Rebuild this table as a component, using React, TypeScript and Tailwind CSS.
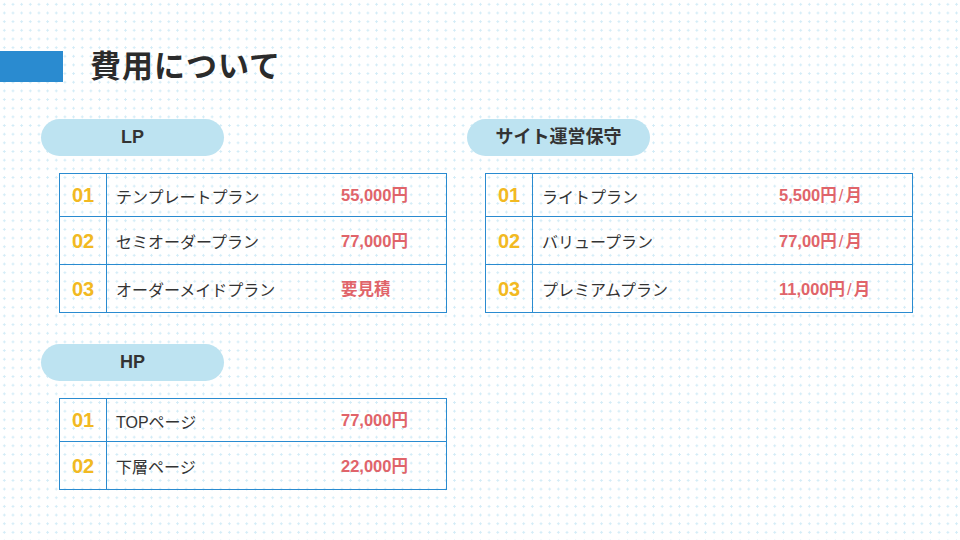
import React from "react";

type Row = { no: string; name: string; price: string; unit?: boolean };

const lpRows: Row[] = [
  { no: "01", name: "テンプレートプラン", price: "55,000円" },
  { no: "02", name: "セミオーダープラン", price: "77,000円" },
  { no: "03", name: "オーダーメイドプラン", price: "要見積" },
];

const hpRows: Row[] = [
  { no: "01", name: "TOPページ", price: "77,000円" },
  { no: "02", name: "下層ページ", price: "22,000円" },
];

const siteRows: Row[] = [
  { no: "01", name: "ライトプラン", price: "5,500円", unit: true },
  { no: "02", name: "バリュープラン", price: "77,00円", unit: true },
  { no: "03", name: "プレミアムプラン", price: "11,000円", unit: true },
];

function Pill({ label }: { label: string }) {
  return (
    <div className="flex h-[37px] w-[183px] items-center justify-center rounded-full bg-[#bde3f1] text-[18px] font-bold text-[#333]">
      {label}
    </div>
  );
}

function PriceTable({
  rows,
  width,
  nameWidth,
}: {
  rows: Row[];
  width: string;
  nameWidth: string;
}) {
  return (
    <div className={`ml-[18px] mt-[17px] border border-[#2a8bd0] ${width}`}>
      {rows.map((r, i) => (
        <div
          key={r.no}
          className={`flex items-center ${i === 0 ? "h-[42px]" : "h-[48px] border-t border-[#2a8bd0]"}`}
        >
          <div className="flex h-full w-[47px] items-center justify-center border-r border-[#2a8bd0] text-[20px] font-bold text-[#f2b922]">
            {r.no}
          </div>
          <div className="flex h-full flex-1 items-center pl-[9px]">
            <div className={`pt-[5px] text-[16px] text-[#333] ${nameWidth}`}>{r.name}</div>
            <div className="pt-[1px] text-[16.5px] font-bold text-[#e0646a]">
              {r.price}
              {r.unit && (
                <>
                  <span className="px-[2px] font-normal">/</span>月
                </>
              )}
            </div>
          </div>
        </div>
      ))}
    </div>
  );
}

export default function App() {
  return (
    <div
      className="h-[540px] w-[960px] overflow-hidden bg-white bg-[radial-gradient(circle,#d3ecf7_1px,transparent_1.3px)] bg-[size:8.67px_8.67px] text-[#333]"
      style={{ fontFamily: '"Liberation Sans", "Noto Sans CJK JP", sans-serif' }}
    >
      <div className="flex items-center pt-[51px]">
        <div className="h-[31px] w-[63px] bg-[#2a8bd0]" />
        <h1 className="ml-[27px] text-[31px] font-bold leading-none tracking-[1px] text-[#2b2b2b]">
          費用について
        </h1>
      </div>

      <div className="mt-[37px] flex pl-[41px]">
        <div className="w-[406px]">
          <Pill label="LP" />
          <PriceTable rows={lpRows} width="w-[388px]" nameWidth="w-[225px]" />
          <div className="mt-[31px]">
            <Pill label="HP" />
            <PriceTable rows={hpRows} width="w-[388px]" nameWidth="w-[225px]" />
          </div>
        </div>
        <div className="ml-[20px] w-[446px]">
          <Pill label="サイト運営保守" />
          <PriceTable rows={siteRows} width="w-[428px]" nameWidth="w-[237px]" />
        </div>
      </div>
    </div>
  );
}
